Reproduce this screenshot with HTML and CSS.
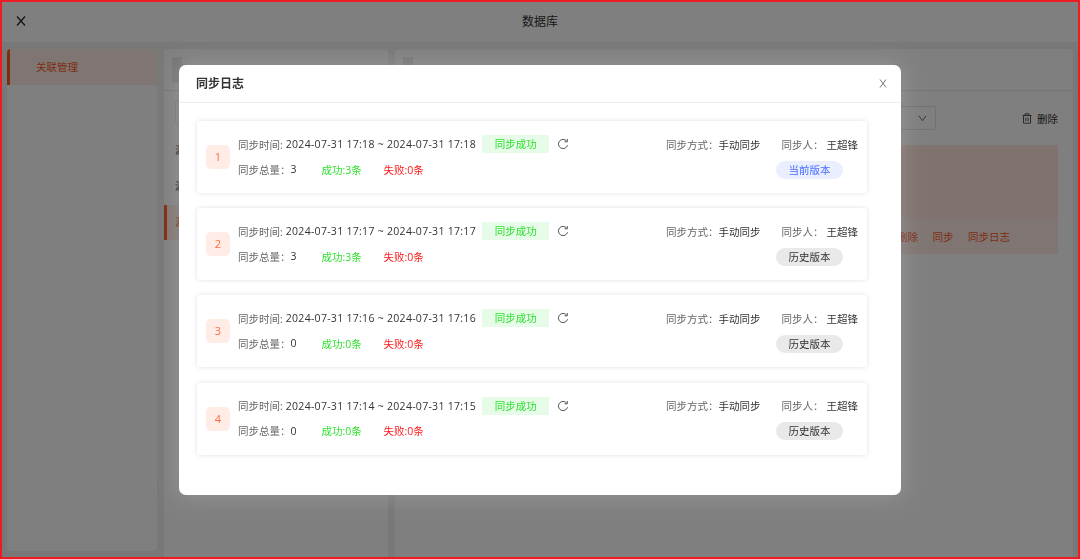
FILE: index.html
```html
<!DOCTYPE html>
<html lang="zh-CN">
  <head>
    <meta charset="UTF-8">
    <meta name="viewport" content="width=device-width, initial-scale=1.0">
    <title>数据库</title>
    <link rel="stylesheet" href="styles.css">
  </head>
  <body>
    <div class="page">
      <header class="topbar">
        <svg class="topbar-close" viewBox="0 0 10 10"><path d="M1 .5L9 9.5M9 .5L1 9.5"/></svg>
        <h1>数据库</h1>
      </header>
      <div class="columns">
        <nav class="side">
          <div class="side-item">关联管理</div>
        </nav>
        <section class="panel list">
          <div class="panel-head"><i class="block tall"></i></div>
          <div class="search"></div>
          <ul>
            <li>源数据</li>
            <li>源数据</li>
            <li class="on">源数据</li>
          </ul>
        </section>
        <section class="panel main">
          <div class="panel-head"><i class="block"></i></div>
          <div class="toolbar">
            <div class="select"><svg viewBox="0 0 10 8"><path d="M1 1l4 5.5L9 1"/></svg></div>
            <div class="delete">
              <svg viewBox="0 0 10 11"><path d="M.5 2.5h9M3 2.5V.8h4v1.7M1.5 2.5v7.7h7V2.5M3.9 4.5v3.7M6.1 4.5v3.7"/></svg>
              删除
            </div>
          </div>
          <div class="source">
            <div class="source-links"><a>删除</a><a>同步</a><a>同步日志</a></div>
          </div>
        </section>
      </div>
    </div>

    <div class="mask"></div>
    <div class="modal">
      <div class="modal-head">
        <h2>同步日志</h2>
        <svg viewBox="0 0 8 9"><path d="M1 .5L7 8.5M7 .5L1 8.5"/></svg>
      </div>
      <div class="modal-body">
        <div class="log">
          <div class="num">1</div>
          <div class="info">
            <div class="row"><span class="label">同步时间:</span><span class="time">2024-07-31 17:18 ~ 2024-07-31 17:18</span><span class="status">同步成功</span><svg class="refresh" viewBox="0 0 12 12"><path d="M9.7 3.2A4.6 4.6 0 1 0 10.5 7.2M10.3 1v2.8H7.5"/></svg></div>
            <div class="row"><span class="label">同步总量：</span><span class="total">3</span><span class="ok">成功:3条</span><span class="fail">失败:0条</span></div>
          </div>
          <div class="meta">
            <div class="row"><span class="label">同步方式：</span><span class="way">手动同步</span><span class="label">同步人：</span><span class="user">王超锋</span></div>
            <div class="version current">当前版本</div>
          </div>
        </div>
        <div class="log">
          <div class="num">2</div>
          <div class="info">
            <div class="row"><span class="label">同步时间:</span><span class="time">2024-07-31 17:17 ~ 2024-07-31 17:17</span><span class="status">同步成功</span><svg class="refresh" viewBox="0 0 12 12"><path d="M9.7 3.2A4.6 4.6 0 1 0 10.5 7.2M10.3 1v2.8H7.5"/></svg></div>
            <div class="row"><span class="label">同步总量：</span><span class="total">3</span><span class="ok">成功:3条</span><span class="fail">失败:0条</span></div>
          </div>
          <div class="meta">
            <div class="row"><span class="label">同步方式：</span><span class="way">手动同步</span><span class="label">同步人：</span><span class="user">王超锋</span></div>
            <div class="version">历史版本</div>
          </div>
        </div>
        <div class="log">
          <div class="num">3</div>
          <div class="info">
            <div class="row"><span class="label">同步时间:</span><span class="time">2024-07-31 17:16 ~ 2024-07-31 17:16</span><span class="status">同步成功</span><svg class="refresh" viewBox="0 0 12 12"><path d="M9.7 3.2A4.6 4.6 0 1 0 10.5 7.2M10.3 1v2.8H7.5"/></svg></div>
            <div class="row"><span class="label">同步总量：</span><span class="total">0</span><span class="ok">成功:0条</span><span class="fail">失败:0条</span></div>
          </div>
          <div class="meta">
            <div class="row"><span class="label">同步方式：</span><span class="way">手动同步</span><span class="label">同步人：</span><span class="user">王超锋</span></div>
            <div class="version">历史版本</div>
          </div>
        </div>
        <div class="log">
          <div class="num">4</div>
          <div class="info">
            <div class="row"><span class="label">同步时间:</span><span class="time">2024-07-31 17:14 ~ 2024-07-31 17:15</span><span class="status">同步成功</span><svg class="refresh" viewBox="0 0 12 12"><path d="M9.7 3.2A4.6 4.6 0 1 0 10.5 7.2M10.3 1v2.8H7.5"/></svg></div>
            <div class="row"><span class="label">同步总量：</span><span class="total">0</span><span class="ok">成功:0条</span><span class="fail">失败:0条</span></div>
          </div>
          <div class="meta">
            <div class="row"><span class="label">同步方式：</span><span class="way">手动同步</span><span class="label">同步人：</span><span class="user">王超锋</span></div>
            <div class="version">历史版本</div>
          </div>
        </div>
      </div>
    </div>
    <div class="frame"></div>
  </body>
</html>
```
FILE: styles.css
```css
*{
  margin: 0;
  padding: 0;
  box-sizing: border-box;
  list-style: none;
}
:root{
  --main-color: #ff5a1f;
  --text-color: #333;
}
body{
  height: 559px;
  overflow: hidden;
  font-family: "Open Sans", "Noto Sans CJK SC", sans-serif;
  font-size: 10.5px;
  color: var(--text-color);
}
svg{
  fill: none;
  stroke: #555;
  stroke-width: 1;
  flex: none;
}
.page{
  height: 559px;
  background: #f0f0f0;
  display: flex;
  flex-direction: column;
}
.topbar{
  height: 42px;
  flex: none;
  display: flex;
  align-items: center;
  padding: 0 16px;
  background: #fff;
}
.topbar-close{
  width: 10px;
  height: 10px;
  stroke: #222;
  stroke-width: 1.2;
}
.topbar h1{
  flex: 1;
  margin-right: 10px;
  text-align: center;
  font-size: 12px;
  font-weight: 400;
}
.columns{
  flex: 1;
  display: flex;
  padding: 7px 7px 0;
}
.side{
  width: 150px;
  height: 502px;
  margin-right: 7px;
  background: #fff;
  border-radius: 4px;
  overflow: hidden;
}
.side-item{
  height: 36px;
  line-height: 36px;
  padding-left: 26px;
  border-left: 3px solid var(--main-color);
  background: #ffece6;
  color: var(--main-color);
}
.panel{
  background: #fff;
  border-radius: 4px 4px 0 0;
}
.panel-head{
  height: 42px;
  padding: 8px;
  border-bottom: 1px solid #e8e8e8;
}
.block{
  display: block;
  width: 10px;
  height: 10px;
  background: #ebebeb;
}
.block.tall{
  height: 26px;
}
.list{
  width: 224px;
  margin-right: 7px;
}
.search{
  height: 24px;
  margin: 9px 11px 4px;
  border: 1px solid #e8e8e8;
  border-radius: 3px;
}
.list li{
  height: 35px;
  line-height: 35px;
  margin-bottom: 1px;
  padding-left: 11px;
}
.list ul{
  padding-top: 5px;
}
.list .on{
  padding-left: 8px;
  border-left: 3px solid var(--main-color);
  background: #ffece6;
  color: var(--main-color);
}
.main{
  flex: 1;
}
.toolbar{
  display: flex;
  justify-content: space-between;
  padding: 15px 15px 0;
}
.select{
  width: 526px;
  height: 24px;
  display: flex;
  align-items: center;
  justify-content: flex-end;
  padding-right: 8px;
  border: 1px solid #e3e3e3;
  border-radius: 2px;
}
.select svg{
  width: 9px;
  height: 7px;
}
.delete{
  display: flex;
  align-items: center;
  gap: 5px;
}
.delete svg{
  width: 10px;
  height: 11px;
}
.source{
  height: 109px;
  margin: 15px 15px 0;
  padding-top: 74px;
  background: #ffe5de;
}
.source-links{
  height: 35px;
  display: flex;
  align-items: center;
  justify-content: flex-end;
  gap: 14.5px;
  padding-right: 48px;
  background: #ffece8;
  color: var(--main-color);
}
.mask{
  position: fixed;
  inset: 0;
  background: rgba(0,0,0,0.5);
}
.modal{
  position: fixed;
  top: 65px;
  left: 179px;
  width: 722px;
  height: 430px;
  background: #fff;
  border-radius: 7px;
  box-shadow: 0 0 24px rgba(200,200,200,0.35);
}
.modal-head{
  height: 38px;
  display: flex;
  align-items: center;
  justify-content: space-between;
  padding: 0 14px 1px 17px;
  border-bottom: 1px solid #eee;
}
.modal-head h2{
  font-size: 12px;
  font-weight: 600;
}
.modal-head svg{
  width: 8px;
  height: 9px;
  stroke: #777;
}
.modal-body{
  display: flex;
  flex-direction: column;
  gap: 15.2px;
  padding: 18px 34px 0 18px;
}
.log{
  height: 72px;
  display: flex;
  align-items: center;
  padding: 0 9px;
  border-radius: 3px;
  box-shadow: 0 0 5px rgba(0,0,0,0.12);
}
.num{
  width: 24px;
  height: 24px;
  line-height: 24px;
  margin-right: 8px;
  text-align: center;
  border-radius: 5px;
  background: #ffece6;
  color: #ff6b40;
  font-size: 11px;
}
.info{
  flex: 1;
  height: 51px;
}
.meta{
  width: 192px;
  height: 51px;
}
.row{
  height: 25px;
  display: flex;
  align-items: center;
  white-space: nowrap;
}
.label{
  color: #666;
}
.time{
  width: 190px;
  margin: 0 6.5px 0 3px;
  letter-spacing: 0.29px;
}
.status{
  width: 67px;
  height: 18px;
  line-height: 18px;
  text-align: center;
  background: #e6fbe8;
  color: #2fe02f;
}
.refresh{
  width: 12px;
  height: 12px;
  margin-left: 8px;
}
.total{
  width: 31px;
}
.ok{
  width: 62px;
  color: #2fe02f;
}
.fail{
  color: #ff1a1a;
}
.way{
  width: 64px;
}
.user{
  margin-left: 3px;
}
.version{
  width: 67px;
  height: 18px;
  line-height: 18px;
  margin: 4px 0 0 110px;
  border-radius: 9px;
  text-align: center;
  background: #e9e9e9;
}
.version.current{
  background: #e9efff;
  color: #4a6dff;
}
.frame{
  position: fixed;
  inset: 0;
  border: 2px solid #ed1c24;
}
```
